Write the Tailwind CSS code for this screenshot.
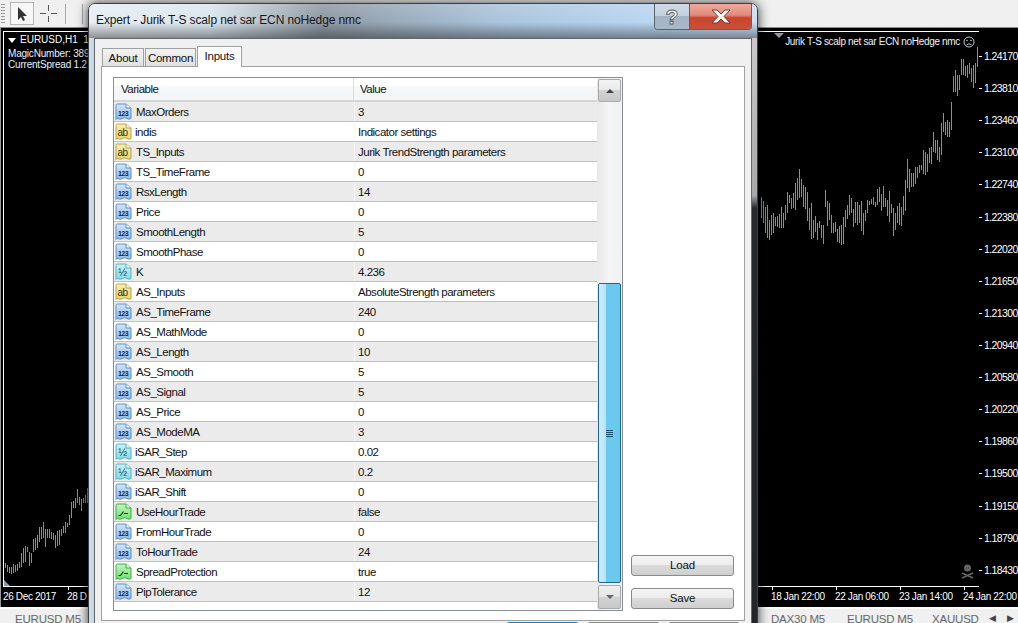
<!DOCTYPE html>
<html>
<head>
<meta charset="utf-8">
<title>Expert</title>
<script src="https://cdn.jsdelivr.net/npm/@tailwindcss/browser@4"></script>
</head>
<body class="bg-black">
<svg class="absolute w-0 h-0" aria-hidden="true">
  <defs>
    <linearGradient id="gn" x1="0" y1="0" x2="0" y2="1"><stop offset="0" stop-color="#d3e6f8"/><stop offset="1" stop-color="#8fb8e4"/></linearGradient>
    <linearGradient id="ga" x1="0" y1="0" x2="0" y2="1"><stop offset="0" stop-color="#f8f0b8"/><stop offset="1" stop-color="#e8d470"/></linearGradient>
    <linearGradient id="gh" x1="0" y1="0" x2="0" y2="1"><stop offset="0" stop-color="#cdf2f6"/><stop offset="1" stop-color="#84d8e6"/></linearGradient>
    <linearGradient id="gb" x1="0" y1="0" x2="0" y2="1"><stop offset="0" stop-color="#c4f4c0"/><stop offset="1" stop-color="#6fe070"/></linearGradient>
    <symbol id="i-num" viewBox="0 0 17 18"><path d="M1 2.500Q1 1 2.500 1H11L16 5V15.500Q14 17 12 15.500Q9.500 14 7.500 15.500Q4.500 17 3 15.500Q1.800 15 1 16.500Z" fill="url(#gn)" stroke="#5c90c8"/><path d="M11 1V5H16" fill="#eef6fd" stroke="#5c90c8"/><text x="8" y="12.500" text-anchor="middle" font-family="Liberation Sans" font-size="7" font-weight="700" fill="#0e2c55">123</text></symbol>
    <symbol id="i-ab" viewBox="0 0 17 18"><path d="M1 2.500Q1 1 2.500 1H11L16 5V15.500Q14 17 12 15.500Q9.500 14 7.500 15.500Q4.500 17 3 15.500Q1.800 15 1 16.500Z" fill="url(#ga)" stroke="#b8a240"/><path d="M11 1V5H16" fill="#fdf9dc" stroke="#b8a240"/><text x="7.500" y="12.500" text-anchor="middle" font-family="Liberation Sans" font-size="10" fill="#3b3000">ab</text></symbol>
    <symbol id="i-half" viewBox="0 0 17 18"><path d="M1 2.500Q1 1 2.500 1H11L16 5V15.500Q14 17 12 15.500Q9.500 14 7.500 15.500Q4.500 17 3 15.500Q1.800 15 1 16.500Z" fill="url(#gh)" stroke="#4eb4c8"/><path d="M11 1V5H16" fill="#ecfbfd" stroke="#4eb4c8"/><text x="7.500" y="12.500" text-anchor="middle" font-family="Liberation Sans" font-size="10.500" fill="#0f4a5a">½</text></symbol>
    <symbol id="i-bool" viewBox="0 0 17 18"><path d="M1 2.500Q1 1 2.500 1H11L16 5V15.500Q14 17 12 15.500Q9.500 14 7.500 15.500Q4.500 17 3 15.500Q1.800 15 1 16.500Z" fill="url(#gb)" stroke="#3fae42"/><path d="M11 1V5H16" fill="#e6fbe4" stroke="#3fae42"/><path d="M3.500 12.500H5.500L8.500 8.500M9 10.500H13" fill="none" stroke="#123c14" stroke-width="1.200"/></symbol>
  </defs>
</svg>

<div class="relative w-[1018px] h-[623px] overflow-hidden flex flex-col bg-black font-['Liberation_Sans',sans-serif] text-[11px] leading-none text-[#111]">

  <!-- terminal toolbar -->
  <div class="h-[28px] shrink-0 flex items-center gap-[3px] bg-[#f0f0f0] border-b border-[#8a8a8a] pl-[1px]">
    <div class="w-[4px] h-[20px] bg-[repeating-linear-gradient(to_bottom,#999_0,#999_1px,#f0f0f0_1px,#f0f0f0_3px)]"></div>
    <div class="ml-[2px] w-[24px] h-[23px] flex items-center justify-center border border-[#b4b4b4] bg-[#f7f7f7]">
      <svg width="12" height="16" viewBox="0 0 12 16"><path d="M2 1V14L5 11L7 15L9 14L7 10H11Z" fill="#333"/></svg>
    </div>
    <div class="ml-[2px] w-[18px] h-[18px] flex items-center justify-center">
      <svg width="17" height="17" viewBox="0 0 17 17"><path d="M8.500 0V6M8.500 11V17M0 8.500H6M11 8.500H17" stroke="#555"/></svg>
    </div>
    <div class="ml-[5px] w-px h-[20px] bg-[#a8a8a8]"></div>
    <div class="ml-[13px] w-px h-[20px] bg-[#a8a8a8]"></div>
  </div>

  <!-- chart window -->
  <div class="h-[579px] shrink-0 flex flex-col bg-black pt-[3px] border-l-[1px] border-[#9a9a9a]">
    <div class="h-[556px] flex pl-[2px]">
      <div class="relative flex-1 border-l border-t border-b border-white text-[#e8f2ff] text-[10px]">
        <div class="absolute left-[757px] top-0 flex items-start gap-px [&>b]:w-px [&>b]:shrink-0 [&>b]:bg-[#00f000]"><b style="margin-top:165px;height:21px"></b><b style="margin-top:169px;height:22px"></b><b style="margin-top:175px;height:26px"></b><b style="margin-top:173px;height:33px"></b><b style="margin-top:188px;height:20px"></b><b style="margin-top:183px;height:20px"></b><b style="margin-top:181px;height:20px"></b><b style="margin-top:185px;height:9px"></b><b style="margin-top:184px;height:11px"></b><b style="margin-top:182px;height:14px"></b><b style="margin-top:175px;height:21px"></b><b style="margin-top:181px;height:15px"></b><b style="margin-top:173px;height:15px"></b><b style="margin-top:160px;height:21px"></b><b style="margin-top:163px;height:8px"></b><b style="margin-top:166px;height:11px"></b><b style="margin-top:161px;height:15px"></b><b style="margin-top:151px;height:27px"></b><b style="margin-top:146px;height:22px"></b><b style="margin-top:137px;height:29px"></b><b style="margin-top:147px;height:18px"></b><b style="margin-top:153px;height:22px"></b><b style="margin-top:155px;height:22px"></b><b style="margin-top:160px;height:29px"></b><b style="margin-top:176px;height:22px"></b><b style="margin-top:171px;height:36px"></b><b style="margin-top:188px;height:18px"></b><b style="margin-top:184px;height:16px"></b><b style="margin-top:191px;height:17px"></b><b style="margin-top:189px;height:7px"></b><b style="margin-top:193px;height:13px"></b><b style="margin-top:193px;height:19px"></b><b style="margin-top:158px;height:17px"></b><b style="margin-top:169px;height:25px"></b><b style="margin-top:171px;height:17px"></b><b style="margin-top:183px;height:18px"></b><b style="margin-top:191px;height:10px"></b><b style="margin-top:190px;height:10px"></b><b style="margin-top:197px;height:13px"></b><b style="margin-top:194px;height:17px"></b><b style="margin-top:193px;height:20px"></b><b style="margin-top:185px;height:27px"></b><b style="margin-top:178px;height:17px"></b><b style="margin-top:173px;height:14px"></b><b style="margin-top:163px;height:20px"></b><b style="margin-top:166px;height:15px"></b><b style="margin-top:177px;height:18px"></b><b style="margin-top:170px;height:21px"></b><b style="margin-top:170px;height:23px"></b><b style="margin-top:173px;height:18px"></b><b style="margin-top:169px;height:30px"></b><b style="margin-top:181px;height:22px"></b><b style="margin-top:178px;height:11px"></b><b style="margin-top:168px;height:13px"></b><b style="margin-top:169px;height:4px"></b><b style="margin-top:167px;height:5px"></b><b style="margin-top:165px;height:8px"></b><b style="margin-top:170px;height:5px"></b><b style="margin-top:157px;height:16px"></b><b style="margin-top:155px;height:15px"></b><b style="margin-top:162px;height:17px"></b><b style="margin-top:154px;height:21px"></b><b style="margin-top:166px;height:9px"></b><b style="margin-top:168px;height:16px"></b><b style="margin-top:159px;height:31px"></b><b style="margin-top:172px;height:9px"></b><b style="margin-top:176px;height:28px"></b><b style="margin-top:181px;height:17px"></b><b style="margin-top:174px;height:17px"></b><b style="margin-top:171px;height:22px"></b><b style="margin-top:175px;height:19px"></b><b style="margin-top:164px;height:19px"></b><b style="margin-top:148px;height:31px"></b><b style="margin-top:127px;height:29px"></b><b style="margin-top:137px;height:23px"></b><b style="margin-top:141px;height:14px"></b><b style="margin-top:141px;height:14px"></b><b style="margin-top:135px;height:17px"></b><b style="margin-top:135px;height:11px"></b><b style="margin-top:133px;height:8px"></b><b style="margin-top:133px;height:5px"></b><b style="margin-top:118px;height:24px"></b><b style="margin-top:120px;height:23px"></b><b style="margin-top:122px;height:18px"></b><b style="margin-top:116px;height:15px"></b><b style="margin-top:115px;height:17px"></b><b style="margin-top:100px;height:20px"></b><b style="margin-top:108px;height:13px"></b><b style="margin-top:108px;height:20px"></b><b style="margin-top:115px;height:15px"></b><b style="margin-top:91px;height:32px"></b><b style="margin-top:81px;height:19px"></b><b style="margin-top:90px;height:13px"></b><b style="margin-top:88px;height:17px"></b><b style="margin-top:90px;height:15px"></b><b style="margin-top:70px;height:28px"></b><b style="margin-top:44px;height:16px"></b><b style="margin-top:38px;height:22px"></b><b style="margin-top:43px;height:21px"></b><b style="margin-top:43px;height:15px"></b><b style="margin-top:27px;height:16px"></b><b style="margin-top:27px;height:16px"></b><b style="margin-top:34px;height:10px"></b><b style="margin-top:33px;height:13px"></b><b style="margin-top:31px;height:11px"></b><b style="margin-top:36px;height:14px"></b><b style="margin-top:33px;height:23px"></b><b style="margin-top:31px;height:20px"></b><b style="margin-top:15px;height:20px"></b></div>
        <div class="absolute left-[1px] top-0 flex items-start gap-px [&>b]:w-px [&>b]:shrink-0 [&>b]:bg-[#00f000]"><b style="margin-top:531px;height:5px"></b><b style="margin-top:533px;height:7px"></b><b style="margin-top:535px;height:6px"></b><b style="margin-top:535px;height:7px"></b><b style="margin-top:532px;height:9px"></b><b style="margin-top:533px;height:7px"></b><b style="margin-top:532px;height:7px"></b><b style="margin-top:530px;height:6px"></b><b style="margin-top:521px;height:14px"></b><b style="margin-top:516px;height:15px"></b><b style="margin-top:514px;height:16px"></b><b style="margin-top:515px;height:5px"></b><b style="margin-top:520px;height:14px"></b><b style="margin-top:521px;height:10px"></b><b style="margin-top:507px;height:13px"></b><b style="margin-top:506px;height:12px"></b><b style="margin-top:503px;height:13px"></b><b style="margin-top:495px;height:15px"></b><b style="margin-top:495px;height:12px"></b><b style="margin-top:490px;height:16px"></b><b style="margin-top:497px;height:18px"></b><b style="margin-top:497px;height:9px"></b><b style="margin-top:497px;height:9px"></b><b style="margin-top:500px;height:7px"></b><b style="margin-top:501px;height:7px"></b><b style="margin-top:503px;height:13px"></b><b style="margin-top:499px;height:15px"></b><b style="margin-top:498px;height:15px"></b><b style="margin-top:497px;height:7px"></b><b style="margin-top:494px;height:7px"></b><b style="margin-top:490px;height:11px"></b><b style="margin-top:491px;height:4px"></b><b style="margin-top:483px;height:10px"></b><b style="margin-top:470px;height:16px"></b><b style="margin-top:469px;height:7px"></b><b style="margin-top:466px;height:10px"></b><b style="margin-top:457px;height:14px"></b><b style="margin-top:465px;height:8px"></b><b style="margin-top:467px;height:12px"></b><b style="margin-top:466px;height:5px"></b><b style="margin-top:463px;height:8px"></b><b style="margin-top:456px;height:15px"></b></div>
        <div class="relative pl-[4px] pt-[3px] flex flex-col">
          <div class="flex items-center gap-[4px] h-[10px]"><span class="w-0 h-0 border-l-[4px] border-r-[4px] border-t-[5px] border-l-transparent border-r-transparent border-t-white"></span><span class="text-white">EURUSD,H1&nbsp;&nbsp;1.</span></div>
          <div class="h-[10px] mt-[4px] tracking-[-0.2px]">MagicNumber: 389</div>
          <div class="h-[10px] mt-[1px] tracking-[-0.2px]">CurrentSpread 1.2</div>
        </div>
        <div class="absolute right-[4px] top-[1px] flex items-center gap-[3px] h-[18px]">
          <span class="w-0 h-0 mb-[14px] mr-[-4px] border-l-[5px] border-r-[5px] border-t-[5px] border-l-transparent border-r-transparent border-t-[#8a9aa8]"></span>
          <span class="pl-[2px] tracking-[-0.33px]">Jurik T-S scalp net sar ECN noHedge nmc</span>
          <svg width="12" height="12" viewBox="0 0 12 12"><circle cx="6" cy="6" r="5" fill="none" stroke="#c0c8d0"/><circle cx="4" cy="4.500" r="0.800" fill="#c0c8d0"/><circle cx="8" cy="4.500" r="0.800" fill="#c0c8d0"/><path d="M3.500 9Q6 6.500 8.500 9" fill="none" stroke="#c0c8d0"/></svg>
        </div>
        <svg class="absolute right-[5px] bottom-[7px]" width="13" height="15" viewBox="0 0 13 15"><circle cx="6.500" cy="4" r="3.500" fill="#666"/><path d="M5 4h.6M7.500 4h.6" stroke="#000"/><path d="M1 9L12 14M12 9L1 14" stroke="#666" stroke-width="1.500"/></svg>
        <div class="absolute left-0 bottom-0 w-0 h-0 border-l-[6px] border-t-[6px] border-l-[#8a9aa8] border-t-transparent"></div>
      </div>
      <div class="w-[39px] flex flex-col pt-[20px] text-white text-[10.500px] tracking-[-0.6px]">
        <div class="h-[33px] flex items-start gap-[2px]"><span class="w-[3px] h-px bg-white mt-[5px]"></span><span>1.24170</span></div>
        <div class="h-[33px] flex items-start gap-[2px]"><span class="w-[3px] h-px bg-white mt-[5px]"></span><span>1.23810</span></div>
        <div class="h-[33px] flex items-start gap-[2px]"><span class="w-[3px] h-px bg-white mt-[5px]"></span><span>1.23460</span></div>
        <div class="h-[33px] flex items-start gap-[2px]"><span class="w-[3px] h-px bg-white mt-[5px]"></span><span>1.23100</span></div>
        <div class="h-[33px] flex items-start gap-[2px]"><span class="w-[3px] h-px bg-white mt-[5px]"></span><span>1.22740</span></div>
        <div class="h-[33px] flex items-start gap-[2px]"><span class="w-[3px] h-px bg-white mt-[5px]"></span><span>1.22380</span></div>
        <div class="h-[33px] flex items-start gap-[2px]"><span class="w-[3px] h-px bg-white mt-[5px]"></span><span>1.22020</span></div>
        <div class="h-[33px] flex items-start gap-[2px]"><span class="w-[3px] h-px bg-white mt-[5px]"></span><span>1.21650</span></div>
        <div class="h-[33px] flex items-start gap-[2px]"><span class="w-[3px] h-px bg-white mt-[5px]"></span><span>1.21300</span></div>
        <div class="h-[33px] flex items-start gap-[2px]"><span class="w-[3px] h-px bg-white mt-[5px]"></span><span>1.20940</span></div>
        <div class="h-[33px] flex items-start gap-[2px]"><span class="w-[3px] h-px bg-white mt-[5px]"></span><span>1.20580</span></div>
        <div class="h-[33px] flex items-start gap-[2px]"><span class="w-[3px] h-px bg-white mt-[5px]"></span><span>1.20220</span></div>
        <div class="h-[33px] flex items-start gap-[2px]"><span class="w-[3px] h-px bg-white mt-[5px]"></span><span>1.19860</span></div>
        <div class="h-[33px] flex items-start gap-[2px]"><span class="w-[3px] h-px bg-white mt-[5px]"></span><span>1.19500</span></div>
        <div class="h-[33px] flex items-start gap-[2px]"><span class="w-[3px] h-px bg-white mt-[5px]"></span><span>1.19150</span></div>
        <div class="h-[33px] flex items-start gap-[2px]"><span class="w-[3px] h-px bg-white mt-[5px]"></span><span>1.18790</span></div>
        <div class="h-[23px] flex items-start gap-[2px]"><span class="w-[3px] h-px bg-white mt-[5px]"></span><span>1.18430</span></div>
      </div>
    </div>
    <!-- time axis -->
    <div class="relative h-[20px] flex text-white text-[10px] tracking-[-0.35px] pt-[5px]">
      <span class="ml-[2px] w-[64px]">26 Dec 2017</span>
      <span class="relative w-[704px]"><i class="absolute left-[1px] -top-[5px] w-px h-[3px] bg-white"></i>28 D</span>
      <span class="relative w-[64px]"><i class="absolute left-[1px] -top-[5px] w-px h-[3px] bg-white"></i>18 Jan 22:00</span>
      <span class="relative w-[64px]"><i class="absolute left-[1px] -top-[5px] w-px h-[3px] bg-white"></i>22 Jan 06:00</span>
      <span class="relative w-[64px]"><i class="absolute left-[1px] -top-[5px] w-px h-[3px] bg-white"></i>23 Jan 14:00</span>
      <span class="relative whitespace-nowrap"><i class="absolute left-[1px] -top-[5px] w-px h-[3px] bg-white"></i>24 Jan 22:00</span>
    </div>
  </div>

  <!-- window tabs -->
  <div class="flex-1 flex bg-[#f0f0f0] border-t-2 border-white text-[#666] text-[11.500px] tracking-[-0.2px]">
    <span class="w-[771px] pl-[15px] pt-[5px]">EURUSD M5</span>
    <span class="w-[76px] pt-[5px]">DAX30 M5</span>
    <span class="w-[85px] pt-[5px]">EURUSD M5</span>
    <span class="w-[57px] pt-[5px]">XAUUSD M</span>
    <span class="pt-[5px] text-[#444] text-[9px]">◀ &nbsp; &nbsp; ▶</span>
  </div>

  <!-- expert dialog -->
  <div class="absolute left-[88px] top-[3px] w-[670px] h-[640px] flex flex-col rounded-t-[7px] border border-[#3a3f45] shadow-[0_0_12px_rgba(0,0,0,0.8)] bg-[linear-gradient(to_right,#d4e0ea_0,#c2d2e0_6px,transparent_6px),linear-gradient(to_bottom,#d0d0d0_0,#a8a8a8_30%,#262a2e_32%,#20262a_100%)]">
    <div class="h-[34px] shrink-0 flex items-start rounded-t-[6px] bg-[linear-gradient(to_bottom,rgba(255,255,255,0.15)_0,transparent_55%,rgba(30,30,30,0.45)_100%),linear-gradient(to_right,#e6edf3_0,#dbe6ef_18%,#8d98a2_35%,#aac4dc_62%,#b5d2ee_80%,#c8dff5_100%)]">
      <span class="pl-[7px] pt-[10px] text-[12px] text-[#161616] tracking-[-0.12px]">Expert - Jurik T-S scalp net sar ECN noHedge nmc</span>
      <div class="ml-auto mr-[5px] h-[26px] flex rounded-b-[4px] border border-t-0 border-[#59626b] overflow-hidden">
        <div class="w-[35px] flex items-center justify-center bg-[linear-gradient(to_bottom,#cfdbe7_0,#c2d0de_50%,#a2b3c6_50%,#a8b9cc_100%)] border-r border-[#59626b]">
          <svg width="16" height="20" viewBox="0 0 16 20"><text x="8" y="17" text-anchor="middle" font-family="Liberation Sans" font-size="21" font-weight="700" fill="#fff" stroke="#545b62" stroke-width="0.900">?</text></svg>
        </div>
        <div class="w-[61px] flex items-center justify-center bg-[linear-gradient(to_bottom,#efa99d_0,#e08a7c_45%,#c9452e_55%,#c9503a_100%)]">
          <svg width="20" height="15" viewBox="0 0 20 15"><path d="M1 1H6L10 5L14 1H19L13 7.500L19 14H14L10 10L6 14H1L7 7.500Z" fill="#f4f4f4" stroke="#6d4038"/></svg>
        </div>
      </div>
    </div>

    <div class="flex-1 mx-[5px] flex flex-col bg-[#f0f0f0] border border-[#5f666c] pt-[7px] px-[6px] min-h-0">
      <div class="h-[20px] flex items-end pl-[1px] shrink-0 text-[11.500px] tracking-[-0.25px]">
        <div class="h-[18px] w-[42px] flex items-center justify-center border border-b-0 border-[#a0a0a0] bg-[linear-gradient(to_bottom,#f3f3f3,#e0e0e0)] pt-[2px]">About</div>
        <div class="ml-[1px] h-[18px] w-[51px] flex items-center justify-center border border-b-0 border-[#a0a0a0] bg-[linear-gradient(to_bottom,#f3f3f3,#e0e0e0)] pt-[2px]">Common</div>
        <div class="relative z-10 -mb-px ml-[1px] h-[21px] w-[45px] flex items-center justify-center border border-b-0 border-[#a0a0a0] bg-white">Inputs</div>
      </div>
      <div class="h-[555px] shrink-0 flex bg-white border border-[#a0a0a0] pl-[11px] pt-[10px]">
        <div class="w-[510px] h-[534px] flex border border-[#8a8f95] text-[11.500px] tracking-[-0.48px]">
          <div class="w-[483px] flex flex-col [&_span]:pt-[2px]">
            <div class="h-[24px] flex bg-[linear-gradient(to_bottom,#ffffff_35%,#f6f7f8_35%,#f4f5f6_100%)] border-b-2 border-[#d5d5d5]">
              <span class="w-[240px] pl-[7px] flex items-center border-r border-[#dcdcdc]">Variable</span>
              <span class="pl-[6px] flex items-center">Value</span>
            </div>
            <div class="h-[20px] flex items-center bg-[#ebebeb] border-b border-[#c0c0c0]"><div class="w-[240px] flex items-center gap-[4px] pl-[1px]"><svg class="shrink-0" width="17" height="18"><use href="#i-num"/></svg><span>MaxOrders</span></div><span class="h-full border-l border-[#f6f6f6] pl-[3px] flex items-center">3</span></div>
            <div class="h-[20px] flex items-center bg-white border-b border-[#c0c0c0]"><div class="w-[240px] flex items-center gap-[3px] pl-[1px]"><svg class="shrink-0" width="17" height="18"><use href="#i-ab"/></svg><span>indis</span></div><span class="h-full border-l border-[#f6f6f6] pl-[3px] flex items-center">Indicator settings</span></div>
            <div class="h-[20px] flex items-center bg-[#ebebeb] border-b border-[#c0c0c0]"><div class="w-[240px] flex items-center gap-[4px] pl-[1px]"><svg class="shrink-0" width="17" height="18"><use href="#i-ab"/></svg><span>TS_Inputs</span></div><span class="h-full border-l border-[#f6f6f6] pl-[3px] flex items-center">Jurik TrendStrength parameters</span></div>
            <div class="h-[20px] flex items-center bg-white border-b border-[#c0c0c0]"><div class="w-[240px] flex items-center gap-[4px] pl-[1px]"><svg class="shrink-0" width="17" height="18"><use href="#i-num"/></svg><span>TS_TimeFrame</span></div><span class="h-full border-l border-[#f6f6f6] pl-[3px] flex items-center">0</span></div>
            <div class="h-[20px] flex items-center bg-[#ebebeb] border-b border-[#c0c0c0]"><div class="w-[240px] flex items-center gap-[4px] pl-[1px]"><svg class="shrink-0" width="17" height="18"><use href="#i-num"/></svg><span>RsxLength</span></div><span class="h-full border-l border-[#f6f6f6] pl-[3px] flex items-center">14</span></div>
            <div class="h-[20px] flex items-center bg-white border-b border-[#c0c0c0]"><div class="w-[240px] flex items-center gap-[4px] pl-[1px]"><svg class="shrink-0" width="17" height="18"><use href="#i-num"/></svg><span>Price</span></div><span class="h-full border-l border-[#f6f6f6] pl-[3px] flex items-center">0</span></div>
            <div class="h-[20px] flex items-center bg-[#ebebeb] border-b border-[#c0c0c0]"><div class="w-[240px] flex items-center gap-[4px] pl-[1px]"><svg class="shrink-0" width="17" height="18"><use href="#i-num"/></svg><span>SmoothLength</span></div><span class="h-full border-l border-[#f6f6f6] pl-[3px] flex items-center">5</span></div>
            <div class="h-[20px] flex items-center bg-white border-b border-[#c0c0c0]"><div class="w-[240px] flex items-center gap-[4px] pl-[1px]"><svg class="shrink-0" width="17" height="18"><use href="#i-num"/></svg><span>SmoothPhase</span></div><span class="h-full border-l border-[#f6f6f6] pl-[3px] flex items-center">0</span></div>
            <div class="h-[20px] flex items-center bg-[#ebebeb] border-b border-[#c0c0c0]"><div class="w-[240px] flex items-center gap-[4px] pl-[1px]"><svg class="shrink-0" width="17" height="18"><use href="#i-half"/></svg><span>K</span></div><span class="h-full border-l border-[#f6f6f6] pl-[3px] flex items-center">4.236</span></div>
            <div class="h-[20px] flex items-center bg-white border-b border-[#c0c0c0]"><div class="w-[240px] flex items-center gap-[4px] pl-[1px]"><svg class="shrink-0" width="17" height="18"><use href="#i-ab"/></svg><span>AS_Inputs</span></div><span class="h-full border-l border-[#f6f6f6] pl-[3px] flex items-center">AbsoluteStrength parameters</span></div>
            <div class="h-[20px] flex items-center bg-[#ebebeb] border-b border-[#c0c0c0]"><div class="w-[240px] flex items-center gap-[4px] pl-[1px]"><svg class="shrink-0" width="17" height="18"><use href="#i-num"/></svg><span>AS_TimeFrame</span></div><span class="h-full border-l border-[#f6f6f6] pl-[3px] flex items-center">240</span></div>
            <div class="h-[20px] flex items-center bg-white border-b border-[#c0c0c0]"><div class="w-[240px] flex items-center gap-[4px] pl-[1px]"><svg class="shrink-0" width="17" height="18"><use href="#i-num"/></svg><span>AS_MathMode</span></div><span class="h-full border-l border-[#f6f6f6] pl-[3px] flex items-center">0</span></div>
            <div class="h-[20px] flex items-center bg-[#ebebeb] border-b border-[#c0c0c0]"><div class="w-[240px] flex items-center gap-[4px] pl-[1px]"><svg class="shrink-0" width="17" height="18"><use href="#i-num"/></svg><span>AS_Length</span></div><span class="h-full border-l border-[#f6f6f6] pl-[3px] flex items-center">10</span></div>
            <div class="h-[20px] flex items-center bg-white border-b border-[#c0c0c0]"><div class="w-[240px] flex items-center gap-[4px] pl-[1px]"><svg class="shrink-0" width="17" height="18"><use href="#i-num"/></svg><span>AS_Smooth</span></div><span class="h-full border-l border-[#f6f6f6] pl-[3px] flex items-center">5</span></div>
            <div class="h-[20px] flex items-center bg-[#ebebeb] border-b border-[#c0c0c0]"><div class="w-[240px] flex items-center gap-[4px] pl-[1px]"><svg class="shrink-0" width="17" height="18"><use href="#i-num"/></svg><span>AS_Signal</span></div><span class="h-full border-l border-[#f6f6f6] pl-[3px] flex items-center">5</span></div>
            <div class="h-[20px] flex items-center bg-white border-b border-[#c0c0c0]"><div class="w-[240px] flex items-center gap-[4px] pl-[1px]"><svg class="shrink-0" width="17" height="18"><use href="#i-num"/></svg><span>AS_Price</span></div><span class="h-full border-l border-[#f6f6f6] pl-[3px] flex items-center">0</span></div>
            <div class="h-[20px] flex items-center bg-[#ebebeb] border-b border-[#c0c0c0]"><div class="w-[240px] flex items-center gap-[4px] pl-[1px]"><svg class="shrink-0" width="17" height="18"><use href="#i-num"/></svg><span>AS_ModeMA</span></div><span class="h-full border-l border-[#f6f6f6] pl-[3px] flex items-center">3</span></div>
            <div class="h-[20px] flex items-center bg-white border-b border-[#c0c0c0]"><div class="w-[240px] flex items-center gap-[3px] pl-[1px]"><svg class="shrink-0" width="17" height="18"><use href="#i-half"/></svg><span>iSAR_Step</span></div><span class="h-full border-l border-[#f6f6f6] pl-[3px] flex items-center">0.02</span></div>
            <div class="h-[20px] flex items-center bg-[#ebebeb] border-b border-[#c0c0c0]"><div class="w-[240px] flex items-center gap-[3px] pl-[1px]"><svg class="shrink-0" width="17" height="18"><use href="#i-half"/></svg><span>iSAR_Maximum</span></div><span class="h-full border-l border-[#f6f6f6] pl-[3px] flex items-center">0.2</span></div>
            <div class="h-[20px] flex items-center bg-white border-b border-[#c0c0c0]"><div class="w-[240px] flex items-center gap-[3px] pl-[1px]"><svg class="shrink-0" width="17" height="18"><use href="#i-num"/></svg><span>iSAR_Shift</span></div><span class="h-full border-l border-[#f6f6f6] pl-[3px] flex items-center">0</span></div>
            <div class="h-[20px] flex items-center bg-[#ebebeb] border-b border-[#c0c0c0]"><div class="w-[240px] flex items-center gap-[4px] pl-[1px]"><svg class="shrink-0" width="17" height="18"><use href="#i-bool"/></svg><span>UseHourTrade</span></div><span class="h-full border-l border-[#f6f6f6] pl-[3px] flex items-center">false</span></div>
            <div class="h-[20px] flex items-center bg-white border-b border-[#c0c0c0]"><div class="w-[240px] flex items-center gap-[4px] pl-[1px]"><svg class="shrink-0" width="17" height="18"><use href="#i-num"/></svg><span>FromHourTrade</span></div><span class="h-full border-l border-[#f6f6f6] pl-[3px] flex items-center">0</span></div>
            <div class="h-[20px] flex items-center bg-[#ebebeb] border-b border-[#c0c0c0]"><div class="w-[240px] flex items-center gap-[4px] pl-[1px]"><svg class="shrink-0" width="17" height="18"><use href="#i-num"/></svg><span>ToHourTrade</span></div><span class="h-full border-l border-[#f6f6f6] pl-[3px] flex items-center">24</span></div>
            <div class="h-[20px] flex items-center bg-white border-b border-[#c0c0c0]"><div class="w-[240px] flex items-center gap-[4px] pl-[1px]"><svg class="shrink-0" width="17" height="18"><use href="#i-bool"/></svg><span>SpreadProtection</span></div><span class="h-full border-l border-[#f6f6f6] pl-[3px] flex items-center">true</span></div>
            <div class="h-[20px] flex items-center bg-[#ebebeb] border-b border-[#c0c0c0]"><div class="w-[240px] flex items-center gap-[4px] pl-[1px]"><svg class="shrink-0" width="17" height="18"><use href="#i-num"/></svg><span>PipTolerance</span></div><span class="h-full border-l border-[#f6f6f6] pl-[3px] flex items-center">12</span></div>
          </div>
          <!-- scrollbar -->
          <div class="flex-1 flex flex-col bg-[linear-gradient(to_right,#e8e8e8,#f5f5f5_50%,#f0f0f0)] py-px">
            <div class="h-[23px] mx-[1px] flex items-center justify-center border border-[#a9a9a9] rounded-[2px] bg-[linear-gradient(to_bottom,#f4f4f4,#e8e8e8_50%,#d2d2d2_50%,#c8c8c8)]">
              <span class="w-0 h-0 border-l-[4px] border-r-[4px] border-b-[4px] border-l-transparent border-r-transparent border-b-[#444]"></span>
            </div>
            <div class="flex-1 pt-[181px] pb-[2px] min-h-0 flex flex-col">
              <div class="flex-1 mx-[1px] flex items-center justify-center border border-[#1f6496] rounded-[2px] bg-[linear-gradient(to_right,#cfeefb_0,#b6e2f6_35%,#6cc9ee_35%,#6cc9ee_100%)]">
                <div class="w-[7px] h-[7px] bg-[repeating-linear-gradient(to_bottom,#1d4e70_0,#1d4e70_1px,transparent_1px,transparent_2px)]"></div>
              </div>
            </div>
            <div class="h-[24px] mx-[1px] flex items-center justify-center border border-[#a9a9a9] rounded-[2px] bg-[linear-gradient(to_bottom,#f0f0f0,#e4e4e4_50%,#d2d2d2_50%,#c8c8c8)]">
              <span class="w-0 h-0 border-l-[4px] border-r-[4px] border-t-[4px] border-l-transparent border-r-transparent border-t-[#666]"></span>
            </div>
          </div>
        </div>
        <div class="ml-[8px] w-[103px] h-[534px] flex flex-col justify-end gap-[12px] pb-[2px] text-[11.500px] tracking-[-0.2px]">
          <div class="h-[21px] flex items-center justify-center border border-[#8a8a8a] rounded-[3px] pt-[1px] bg-[linear-gradient(to_bottom,#f4f4f4,#ececec_50%,#dbdbdb_50%,#cfcfcf)]">Load</div>
          <div class="h-[21px] flex items-center justify-center border border-[#8a8a8a] rounded-[3px] pt-[1px] bg-[linear-gradient(to_bottom,#f4f4f4,#ececec_50%,#dbdbdb_50%,#cfcfcf)]">Save</div>
        </div>
      </div>
      <div class="flex pl-[405px] gap-[8px] mt-[1px]">
        <div class="w-[73px] h-[20px] rounded-t-[3px] border border-[#1f7fb8] bg-[#9fdcf5]"></div>
        <div class="w-[73px] h-[20px] rounded-t-[3px] border border-[#8a8a8a] bg-[#f4f4f4]"></div>
        <div class="w-[72px] h-[20px] rounded-t-[3px] border border-[#8a8a8a] bg-[#f4f4f4]"></div>
      </div>
    </div>
  </div>
</div>
</body>
</html>
